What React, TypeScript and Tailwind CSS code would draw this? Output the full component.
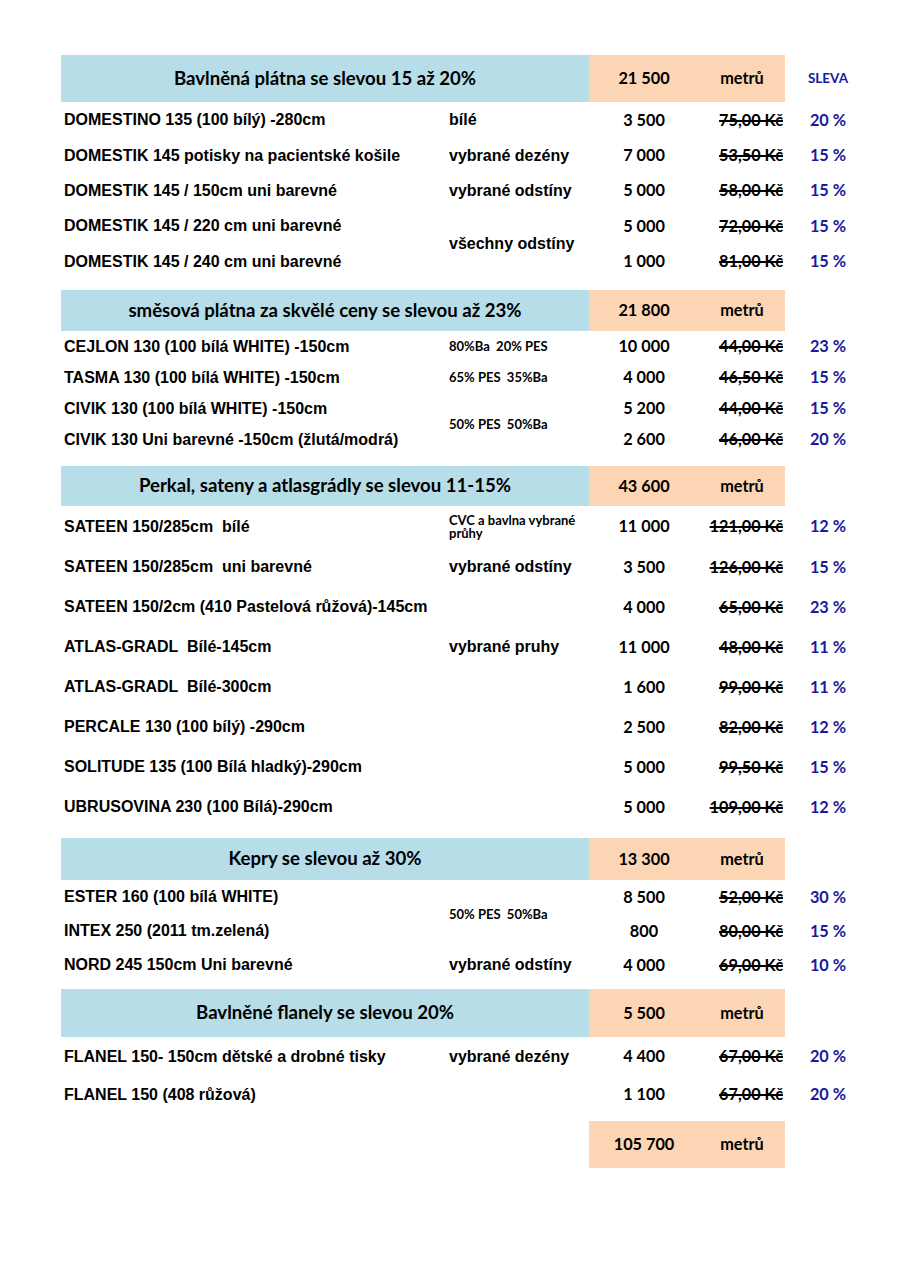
type Item = {
  name: string;
  desc?: string;
  small?: boolean;
  span?: boolean;
  skip?: boolean;
  qty: string;
  price: string;
  pct: string;
};

type Section = {
  title: string;
  total: string;
  rows: string;
  gap: string;
  sleva?: boolean;
  items: Item[];
};

const sections: Section[] = [
  {
    title: "Bavlněná plátna se slevou 15 až 20%",
    total: "21 500",
    rows: "grid-rows-[47px_36px_35px_35px_36px_35px]",
    gap: "mb-[11px]",
    sleva: true,
    items: [
      { name: "DOMESTINO 135 (100 bílý) -280cm", desc: "bílé", qty: "3 500", price: "75,00 Kč", pct: "20 %" },
      { name: "DOMESTIK 145 potisky na pacientské košile", desc: "vybrané dezény", qty: "7 000", price: "53,50 Kč", pct: "15 %" },
      { name: "DOMESTIK 145 / 150cm uni barevné", desc: "vybrané odstíny", qty: "5 000", price: "58,00 Kč", pct: "15 %" },
      { name: "DOMESTIK 145 / 220 cm uni barevné", desc: "všechny odstíny", span: true, qty: "5 000", price: "72,00 Kč", pct: "15 %" },
      { name: "DOMESTIK 145 / 240 cm uni barevné", skip: true, qty: "1 000", price: "81,00 Kč", pct: "15 %" },
    ],
  },
  {
    title: "směsová plátna za skvělé ceny se slevou až 23%",
    total: "21 800",
    rows: "grid-rows-[41px_31px_31px_31px_31px]",
    gap: "mb-[11px]",
    items: [
      { name: "CEJLON 130 (100 bílá WHITE) -150cm", desc: "80%Ba  20% PES", small: true, qty: "10 000", price: "44,00 Kč", pct: "23 %" },
      { name: "TASMA 130 (100 bílá WHITE) -150cm", desc: "65% PES  35%Ba", small: true, qty: "4 000", price: "46,50 Kč", pct: "15 %" },
      { name: "CIVIK 130 (100 bílá WHITE) -150cm", desc: "50% PES  50%Ba", small: true, span: true, qty: "5 200", price: "44,00 Kč", pct: "15 %" },
      { name: "CIVIK 130 Uni barevné -150cm (žlutá/modrá)", skip: true, qty: "2 600", price: "46,00 Kč", pct: "20 %" },
    ],
  },
  {
    title: "Perkal, sateny a atlasgrádly se slevou 11-15%",
    total: "43 600",
    rows: "grid-rows-[40px_41px_40px_40px_40px_40px_40px_40px_40px]",
    gap: "mb-[11px]",
    items: [
      { name: "SATEEN 150/285cm  bílé", desc: "CVC a bavlna vybrané\nprůhy", small: true, qty: "11 000", price: "121,00 Kč", pct: "12 %" },
      { name: "SATEEN 150/285cm  uni barevné", desc: "vybrané odstíny", qty: "3 500", price: "126,00 Kč", pct: "15 %" },
      { name: "SATEEN 150/2cm (410 Pastelová růžová)-145cm", qty: "4 000", price: "65,00 Kč", pct: "23 %" },
      { name: "ATLAS-GRADL  Bílé-145cm", desc: "vybrané pruhy", qty: "11 000", price: "48,00 Kč", pct: "11 %" },
      { name: "ATLAS-GRADL  Bílé-300cm", qty: "1 600", price: "99,00 Kč", pct: "11 %" },
      { name: "PERCALE 130 (100 bílý) -290cm", qty: "2 500", price: "82,00 Kč", pct: "12 %" },
      { name: "SOLITUDE 135 (100 Bílá hladký)-290cm", qty: "5 000", price: "99,50 Kč", pct: "15 %" },
      { name: "UBRUSOVINA 230 (100 Bílá)-290cm", qty: "5 000", price: "109,00 Kč", pct: "12 %" },
    ],
  },
  {
    title: "Kepry se slevou až 30%",
    total: "13 300",
    rows: "grid-rows-[42px_34px_34px_34px]",
    gap: "mb-[7px]",
    items: [
      { name: "ESTER 160 (100 bílá WHITE)", desc: "50% PES  50%Ba", small: true, span: true, qty: "8 500", price: "52,00 Kč", pct: "30 %" },
      { name: "INTEX 250 (2011 tm.zelená)", skip: true, qty: "800", price: "80,00 Kč", pct: "15 %" },
      { name: "NORD 245 150cm Uni barevné", desc: "vybrané odstíny", qty: "4 000", price: "69,00 Kč", pct: "10 %" },
    ],
  },
  {
    title: "Bavlněné flanely se slevou 20%",
    total: "5 500",
    rows: "grid-rows-[48px_39px_37px]",
    gap: "mb-[8px]",
    items: [
      { name: "FLANEL 150- 150cm dětské a drobné tisky", desc: "vybrané dezény", qty: "4 400", price: "67,00 Kč", pct: "20 %" },
      { name: "FLANEL 150 (408 růžová)", qty: "1 100", price: "67,00 Kč", pct: "20 %" },
    ],
  },
];

const arial = "font-['Liberation_Sans',Arial,sans-serif] font-bold text-[16px] text-black";
const cal = "font-['Lato',sans-serif] font-bold text-black";
const cols = "grid grid-cols-[388px_140px_110px_86px_86px]";

function SectionBlock({ s }: { s: Section }) {
  return (
    <div className={`${cols} ${s.rows} ${s.gap}`}>
      <div className={`col-span-2 bg-[#b7dde8] flex items-center justify-center ${cal} text-[18.6px]`}>
        {s.title}
      </div>
      <div className={`bg-[#fcd5b4] flex items-center justify-center ${cal} text-[16.3px]`}>{s.total}</div>
      <div className={`bg-[#fcd5b4] flex items-center justify-center ${cal} text-[16.3px]`}>metrů</div>
      <div className={`flex items-center justify-center ${cal} text-[13.5px] !text-[#1a1a9c]`}>
        {s.sleva ? "SLEVA" : ""}
      </div>
      {s.items.map((it) => (
        <Row key={it.name} it={it} />
      ))}
    </div>
  );
}

function Row({ it }: { it: Item }) {
  return (
    <>
      <div className={`flex items-center pl-[3px] whitespace-pre ${arial}`}>{it.name}</div>
      {!it.skip && (
        <div
          className={`flex items-center whitespace-pre ${it.span ? "row-span-2" : ""} ${
            it.small ? `${cal} text-[13px] leading-[13px]` : arial
          }`}
        >
          {it.desc ?? ""}
        </div>
      )}
      <div className={`flex items-center justify-center ${cal} text-[16.3px]`}>{it.qty}</div>
      <div className={`flex items-center justify-end pr-[2px] ${cal} text-[16.3px] line-through decoration-[1.5px]`}>
        {it.price}
      </div>
      <div className={`flex items-center justify-center ${cal} text-[16.3px] !text-[#1a1a9c]`}>{it.pct}</div>
    </>
  );
}

export default function App() {
  return (
    <div className="w-[911px] h-[1287px] bg-white pt-[55px] pl-[61px]">
      {sections.map((s) => (
        <SectionBlock key={s.title} s={s} />
      ))}
      <div className={`${cols} grid-rows-[47px]`}>
        <div className="col-span-2" />
        <div className={`bg-[#fcd5b4] flex items-center justify-center ${cal} text-[16.3px]`}>105 700</div>
        <div className={`bg-[#fcd5b4] flex items-center justify-center ${cal} text-[16.3px]`}>metrů</div>
        <div />
      </div>
    </div>
  );
}
